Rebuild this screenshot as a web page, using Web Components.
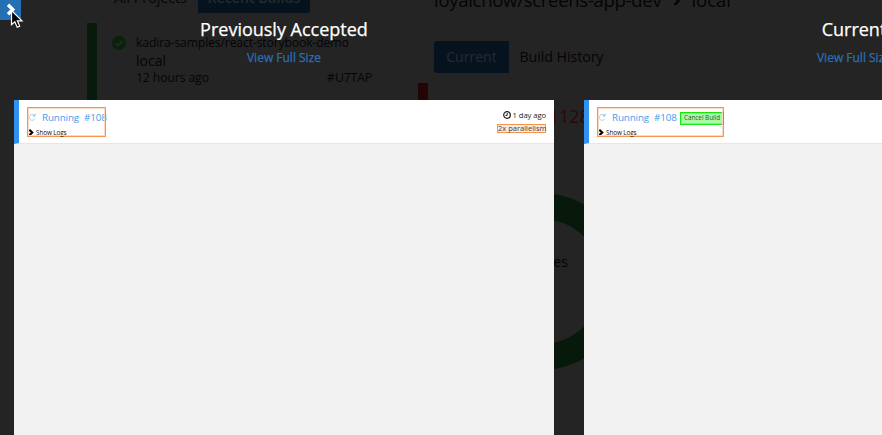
<!DOCTYPE html>
<html lang="en">
<head>
<meta charset="utf-8">
<title>Screens comparison</title>
<style>
html,body{margin:0;height:100%;overflow:hidden;background:#242424;font-family:"Open Sans","Noto Sans",sans-serif}
</style>
</head>
<body>
<compare-app></compare-app>
<script>
function define(name, html) {
  const t = document.createElement('template');
  t.innerHTML = html;
  customElements.define(name, class extends HTMLElement {
    constructor() {
      super();
      this.attachShadow({ mode: 'open' }).append(t.content.cloneNode(true));
    }
  });
}

define('build-item', `
<style>
:host{display:flex;box-sizing:border-box;width:290px;height:90px;border-left:10px solid #081a0b;color:#050505;font-size:12.2px;line-height:18px}
svg{width:14px;height:14px;margin:13px 10px 0 15px;flex:none}
.body{flex:1;padding-top:11px;white-space:nowrap}
.repo{letter-spacing:-.14px}
.branch{font-size:14px;line-height:17px}
.row{display:flex;justify-content:space-between;margin:0 5px 0 0;letter-spacing:-.1px}
</style>
<svg viewBox="0 0 14 14"><circle cx="7" cy="7" r="7" fill="#082309"/><path d="M3.7 7.2l2.3 2.400 4.400-4.500" fill="none" stroke="#242424" stroke-width="2.2"/></svg>
<div class="body"><div class="repo"><slot name="repo"></slot></div><div class="branch"><slot name="branch"></slot></div>
<div class="row"><slot name="time"></slot><slot name="id"></slot></div></div>`);

define('result-ring', `
<style>
:host{display:grid;width:177px;height:177px;place-items:center;font-size:14px;color:#030303}
svg,span{grid-area:1/1}
span{margin:-39px 0 0 2px}
</style>
<svg width="177" height="177"><circle cx="88.5" cy="88.5" r="75.5" fill="none" stroke="#07190a" stroke-width="26"/></svg>
<span><slot></slot></span>`);

define('dimmed-page', `
<style>
:host{display:grid;grid-template-columns:331px 1fr;width:882px;height:435px;box-sizing:border-box;padding-left:87px;overflow:hidden;white-space:nowrap;color:#050505}
nav{display:flex;margin:-15px 0 0 27px;height:28px;line-height:25px;font-size:14.2px}
nav b{box-sizing:border-box;width:112px;margin-left:11px;text-align:center;font-weight:600;background:#06121e;color:#242a2f;border-radius:0 3px 3px 0}
build-item{margin-top:10px}
h1{margin:-14px 0 0 16px;font-size:18.5px;font-weight:400;line-height:28px;display:flex;align-items:center}
h1 span{letter-spacing:-.28px}
h1 svg{margin:1px 10px 0 12px}
.tabs{display:flex;margin:27px 0 0 16px;height:32px;line-height:32px;font-size:14.2px}
.tabs span{letter-spacing:-.06px}
.tabs span:first-child{width:75px;text-align:center;background:#06121e;color:#242b30;border-radius:3px 0 0 3px;margin-right:10.5px}
.fail{display:flex;justify-content:space-between;box-sizing:border-box;width:182px;height:60px;margin-top:10px;border-left:10px solid #240507;color:#2b080a;font-size:18px;line-height:67px}
.fail span{margin-left:109px}
result-ring{margin:49.500px 0 0 33.500px}
</style>
<aside><nav><span>All Projects</span><b>Recent Builds</b></nav>
<build-item><span slot="repo">kadira-samples/react-storybook-demo</span><span slot="branch">local</span><span slot="time">12 hours ago</span><span slot="id">#U7TAP</span></build-item></aside>
<main><h1><span>loyalchow/screens-app-dev</span><svg width="8" height="12"><path d="M1.500 2L5.500 6l-4 4" fill="none" stroke="#050505" stroke-width="2.400"/></svg>local</h1>
<div class="tabs"><span>Current</span><span>Build History</span></div>
<div class="fail"><span>#1128</span></div>
<result-ring>changes</result-ring></main>`);

define('status-box', `
<style>
:host{display:block;box-sizing:border-box;height:30px;border:1px solid #fa9350;outline:1px solid #fdd9c0;outline-offset:-2px;white-space:nowrap}
.top{display:flex;align-items:center;height:19px;font-size:9.8px;letter-spacing:-.12px;color:#409cec}
.top svg{margin:0 6px 0 0;flex:none}
.num{margin-left:5px}
.logs{display:flex;align-items:center;height:10px;font-size:6.4px;letter-spacing:-.12px;line-height:10px;color:#111}
.logs svg{margin:0 2px 0 0}
.logs span{padding-top:1px}
</style>
<div class="top"><svg width="8" height="9" fill="none" stroke="#a5d2f7"><path d="M6.400 2.200A3 3 0 1 0 7 5.600"/><path d="M7 .8v2.200H4.800" stroke="#7fbdf1"/></svg><span>Running</span><span class="num">#108</span><slot></slot></div>
<div class="logs"><svg width="6" height="7"><path d="M1.300 .8L4.200 3.500 1.300 6.200" fill="none" stroke="#000" stroke-width="2.200"/></svg><span>Show Logs</span></div>`);

define('cancel-tag', `
<style>:host{display:block;box-sizing:border-box;width:44px;height:13px;margin:1px -1px 0 auto;border:1px solid #16e416;outline:1px solid #7df57d;outline-offset:-2px;background:#a9faa5;color:#28602e;font-size:6.4px;letter-spacing:-.05px;line-height:10px;text-align:center}</style><slot></slot>`);

define('build-time', `
<style>
:host{display:flex;flex-direction:column;align-items:flex-end;font-size:7.7px;line-height:10px;color:#222;white-space:nowrap}
.t{display:flex;align-items:center;gap:2px;height:12px;margin-bottom:3px;letter-spacing:-.1px}
.p{box-sizing:border-box;width:49px;height:9px;border:1px solid #fa9350;background:#f4ece7;line-height:7px;text-align:center;color:#443d39;font-size:7.5px}
</style>
<div class="t"><svg width="8" height="8" fill="none" stroke="#222"><circle cx="4" cy="4" r="3.300" stroke-width="1.200"/><path d="M4.200 2v2.400H2.500"/></svg><slot name="time"></slot></div>
<div class="p"><slot name="parallel"></slot></div>`);

define('screen-panel', `
<style>
:host{display:block;width:540px;flex:none}
header{height:100px;box-sizing:border-box;padding-top:16px;text-align:center;color:#fff;font-size:18px;line-height:27px;-webkit-text-stroke:.25px currentColor}
header a{display:block;font-size:12px;line-height:18px;color:#2870b8;margin-top:6px}
.shot{height:335px;background:#f2f2f2}
.bar{display:flex;justify-content:space-between;box-sizing:border-box;height:44px;border-left:5px solid #3191ee;border-bottom:1px solid #e6e6e6;background:#fff;padding:7px 8px 0}
.time{padding-top:2px}
</style>
<header><slot name="title"></slot><a>View Full Size</a></header>
<div class="shot"><div class="bar"><slot name="status"></slot><div class="time"><slot name="time"></slot></div></div></div>`);

define('mouse-pointer', `
<style>:host{position:absolute;left:10px;top:9px;line-height:0}</style>
<svg width="14" height="20"><path d="M1.500 1.500v14.200l3.300-3 2.400 5.500 2.500-1.100-2.400-5.300h4.700z" fill="#050505" stroke="#fff" stroke-width="1.200"/></svg>`);

define('next-button', `
<style>:host{position:absolute;left:0;top:0;width:21px;height:20px;background:#256fb5;border-radius:0 0 3px 0}</style>
<svg width="21" height="20"><path d="M8 4.800L12.800 9.500 8 14.200" fill="none" stroke="#fff" stroke-width="3.400"/></svg>`);

define('compare-app', `
<style>
:host{display:block;position:relative;width:882px;height:435px;overflow:hidden}
.overlay{position:absolute;inset:0;display:flex;gap:30px;padding-left:14px}
.a{width:79px}.b{width:127px}
</style>
<dimmed-page></dimmed-page>
<div class="overlay">
<screen-panel><span slot="title">Previously Accepted</span><status-box class="a" slot="status"></status-box><build-time slot="time"><span slot="time">1 day ago</span><span slot="parallel">2x parallelism</span></build-time></screen-panel>
<screen-panel><span slot="title">Current</span><status-box class="b" slot="status"><cancel-tag>Cancel Build</cancel-tag></status-box></screen-panel>
</div>
<next-button></next-button><mouse-pointer></mouse-pointer>`);
</script>
</body>
</html>
